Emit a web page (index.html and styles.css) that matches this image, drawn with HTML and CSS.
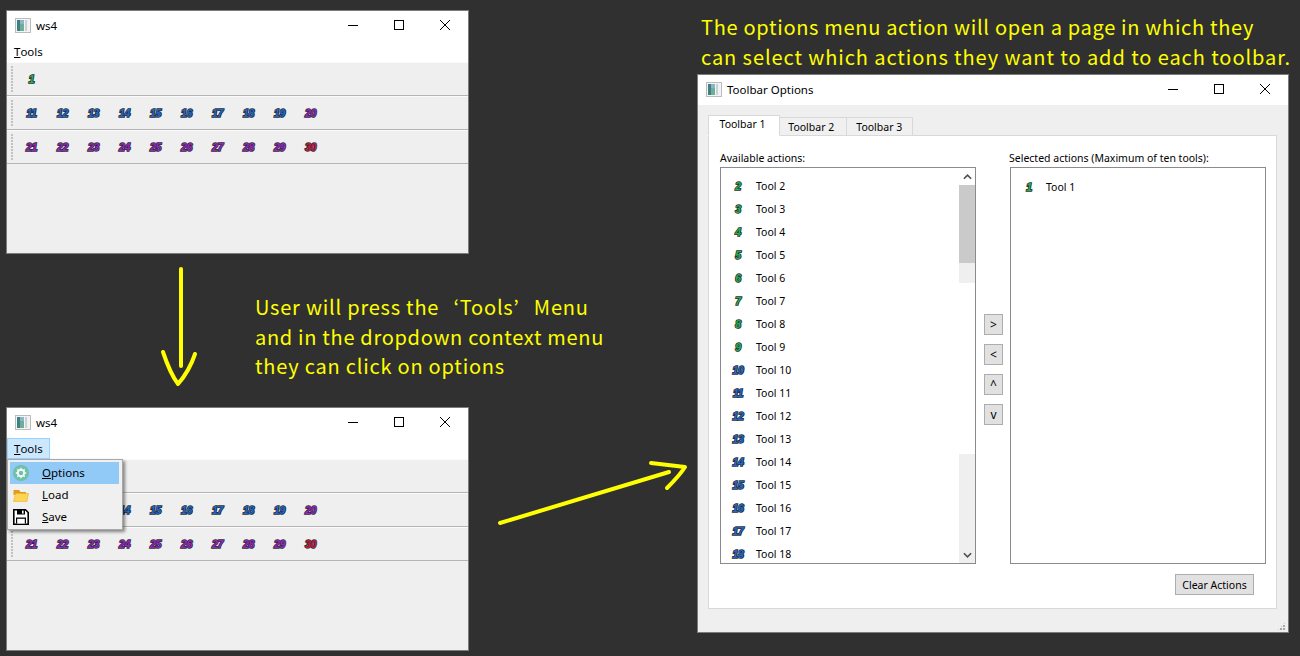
FILE: index.html
```html
<!DOCTYPE html>
<html lang="en">
<head>
    <meta charset="UTF-8">
    <title>Toolbar options walkthrough</title>
    <link rel="stylesheet" href="styles.css">
</head>
<body>
    <svg class="defs">
        <symbol id="appIcon" viewBox="0 0 16 15">
            <rect x="0.5" y="0.5" width="15" height="14" fill="#f4f4f4" stroke="#bcbcbc"/>
            <rect x="2" y="2" width="3" height="11" fill="#3e8088"/>
            <rect x="5" y="2" width="4" height="11" fill="#6fae94"/>
            <rect x="5" y="2" width="4" height="4" fill="#8fb4c8"/>
            <rect x="10" y="2" width="2" height="11" fill="#c4d4d8"/>
            <rect x="12" y="2" width="2" height="11" fill="#eef2f2"/>
        </symbol>
        <symbol id="winMin" viewBox="0 0 10 10">
            <path d="M0 5.5H10" stroke="#000" fill="none"/>
        </symbol>
        <symbol id="winMax" viewBox="0 0 10 10">
            <rect x="0.5" y="0.5" width="9" height="9" stroke="#000" fill="none"/>
        </symbol>
        <symbol id="winClose" viewBox="0 0 10 10">
            <path d="M0 0L10 10M10 0L0 10" stroke="#000" fill="none"/>
        </symbol>
    </svg>

    <svg class="arrows" viewBox="0 0 1300 656">
        <path d="M181 269V366"/>
        <path d="M163 352C167 364 172 376 178 384C185 376 191 366 195 354"/>
        <path d="M500 523L669 472"/>
        <path d="M651 463L685 467C680 475 674 481 667 488"/>
    </svg>

    <p class="note note-menu">User will press the <span class="quote-open">‘</span>Tools<span class="quote-close">’</span> Menu<br><span class="tight">and in the dropdown context menu</span><br>they can click on options</p>
    <p class="note note-options"><span class="tight">The options menu action will open a page in which they</span><br><span class="wide">can select which actions they want to add to each toolbar.</span></p>

    <div class="window win-top">
        <div class="titlebar">
            <svg class="app-icon"><use href="#appIcon"/></svg>
            <span>ws4</span>
            <div class="controls">
                <svg><use href="#winMin"/></svg>
                <svg><use href="#winMax"/></svg>
                <svg><use href="#winClose"/></svg>
            </div>
        </div>
        <div class="menubar"><span class="menu-title"><u>T</u>ools</span></div>
        <div class="toolbar">
            <i class="handle"></i>
            <span class="tool"><b class="num green">1</b></span>
        </div>
        <div class="toolbar">
            <i class="handle"></i>
            <span class="tool"><b class="num blue">11</b></span>
            <span class="tool"><b class="num blue">12</b></span>
            <span class="tool"><b class="num blue">13</b></span>
            <span class="tool"><b class="num blue">14</b></span>
            <span class="tool"><b class="num blue">15</b></span>
            <span class="tool"><b class="num blue">16</b></span>
            <span class="tool"><b class="num blue">17</b></span>
            <span class="tool"><b class="num blue">18</b></span>
            <span class="tool"><b class="num blue">19</b></span>
            <span class="tool"><b class="num purple">20</b></span>
        </div>
        <div class="toolbar">
            <i class="handle"></i>
            <span class="tool"><b class="num purple">21</b></span>
            <span class="tool"><b class="num purple">22</b></span>
            <span class="tool"><b class="num purple">23</b></span>
            <span class="tool"><b class="num purple">24</b></span>
            <span class="tool"><b class="num purple">25</b></span>
            <span class="tool"><b class="num purple">26</b></span>
            <span class="tool"><b class="num purple">27</b></span>
            <span class="tool"><b class="num purple">28</b></span>
            <span class="tool"><b class="num purple">29</b></span>
            <span class="tool"><b class="num red">30</b></span>
        </div>
    </div>

    <div class="window win-bottom">
        <div class="titlebar">
            <svg class="app-icon"><use href="#appIcon"/></svg>
            <span>ws4</span>
            <div class="controls">
                <svg><use href="#winMin"/></svg>
                <svg><use href="#winMax"/></svg>
                <svg><use href="#winClose"/></svg>
            </div>
        </div>
        <div class="menubar"><span class="menu-title open"><u>T</u>ools</span></div>
        <div class="toolbar">
            <i class="handle"></i>
            <span class="tool"><b class="num green">1</b></span>
        </div>
        <div class="toolbar">
            <i class="handle"></i>
            <span class="tool"><b class="num blue">11</b></span>
            <span class="tool"><b class="num blue">12</b></span>
            <span class="tool"><b class="num blue">13</b></span>
            <span class="tool"><b class="num blue">14</b></span>
            <span class="tool"><b class="num blue">15</b></span>
            <span class="tool"><b class="num blue">16</b></span>
            <span class="tool"><b class="num blue">17</b></span>
            <span class="tool"><b class="num blue">18</b></span>
            <span class="tool"><b class="num blue">19</b></span>
            <span class="tool"><b class="num purple">20</b></span>
        </div>
        <div class="toolbar">
            <i class="handle"></i>
            <span class="tool"><b class="num purple">21</b></span>
            <span class="tool"><b class="num purple">22</b></span>
            <span class="tool"><b class="num purple">23</b></span>
            <span class="tool"><b class="num purple">24</b></span>
            <span class="tool"><b class="num purple">25</b></span>
            <span class="tool"><b class="num purple">26</b></span>
            <span class="tool"><b class="num purple">27</b></span>
            <span class="tool"><b class="num purple">28</b></span>
            <span class="tool"><b class="num purple">29</b></span>
            <span class="tool"><b class="num red">30</b></span>
        </div>

        <div class="popup">
            <div class="popup-row active">
                <svg viewBox="0 0 16 16">
                    <circle cx="8" cy="8" r="8" fill="#6fc0a8"/>
                    <circle cx="8" cy="8" r="3.2" fill="none" stroke="#f2f6f6" stroke-width="2"/>
                    <path d="M8 2.8V13.2M2.8 8H13.2M4.3 4.3L11.7 11.7M11.7 4.3L4.3 11.7" stroke="#f2f6f6" stroke-width="1.4" stroke-dasharray="1.6 7.2 1.6 0"/>
                </svg>
                <span><u>O</u>ptions</span>
            </div>
            <div class="popup-row">
                <svg viewBox="0 0 16 16">
                    <path d="M0.5 3H6L7.5 5H13V8H0.5Z" fill="#e09a1c"/>
                    <path d="M0.5 14.5L2.5 6.5H15.5L14 14.5Z" fill="#fcd555" stroke="#eab030" stroke-width="0.6"/>
                </svg>
                <span><u>L</u>oad</span>
            </div>
            <div class="popup-row">
                <svg viewBox="0 0 16 16">
                    <path d="M0.8 0.8H12.5L15.2 3.5V15.2H0.8Z" fill="#fff" stroke="#000" stroke-width="1.6"/>
                    <rect x="4" y="1" width="8" height="4.5" fill="#000"/>
                    <rect x="9" y="1.6" width="1.6" height="3" fill="#fff"/>
                    <rect x="3" y="8.5" width="10" height="6" fill="#000"/>
                    <rect x="4.2" y="9.8" width="7.6" height="4.8" fill="#fff"/>
                </svg>
                <span><u>S</u>ave</span>
            </div>
        </div>
    </div>

    <div class="window win-dialog">
        <div class="titlebar">
            <svg class="app-icon"><use href="#appIcon"/></svg>
            <span>Toolbar Options</span>
            <div class="controls">
                <svg><use href="#winMin"/></svg>
                <svg><use href="#winMax"/></svg>
                <svg><use href="#winClose"/></svg>
            </div>
        </div>
        <div class="dialog-body">
            <div class="tabs">
                <span class="tab active">Toolbar 1</span>
                <span class="tab middle">Toolbar 2</span>
                <span class="tab">Toolbar 3</span>
            </div>
            <div class="tab-pane">
                <div class="columns">
                    <label class="col-label">Available actions:</label>
                    <span></span>
                    <label class="col-label selected-label">Selected actions (Maximum of ten tools):</label>

                    <div class="list">
                        <div class="rows">
                            <div class="row"><span class="row-icon"><b class="num green">2</b></span>Tool 2</div>
                            <div class="row"><span class="row-icon"><b class="num green">3</b></span>Tool 3</div>
                            <div class="row"><span class="row-icon"><b class="num green">4</b></span>Tool 4</div>
                            <div class="row"><span class="row-icon"><b class="num green">5</b></span>Tool 5</div>
                            <div class="row"><span class="row-icon"><b class="num green">6</b></span>Tool 6</div>
                            <div class="row"><span class="row-icon"><b class="num green">7</b></span>Tool 7</div>
                            <div class="row"><span class="row-icon"><b class="num green">8</b></span>Tool 8</div>
                            <div class="row"><span class="row-icon"><b class="num green">9</b></span>Tool 9</div>
                            <div class="row"><span class="row-icon"><b class="num blue">10</b></span>Tool 10</div>
                            <div class="row"><span class="row-icon"><b class="num blue">11</b></span>Tool 11</div>
                            <div class="row"><span class="row-icon"><b class="num blue">12</b></span>Tool 12</div>
                            <div class="row"><span class="row-icon"><b class="num blue">13</b></span>Tool 13</div>
                            <div class="row"><span class="row-icon"><b class="num blue">14</b></span>Tool 14</div>
                            <div class="row"><span class="row-icon"><b class="num blue">15</b></span>Tool 15</div>
                            <div class="row"><span class="row-icon"><b class="num blue">16</b></span>Tool 16</div>
                            <div class="row"><span class="row-icon"><b class="num blue">17</b></span>Tool 17</div>
                            <div class="row"><span class="row-icon"><b class="num blue">18</b></span>Tool 18</div>
                        </div>
                        <div class="scrollbar">
                            <div class="scroll-btn">
                                <svg viewBox="0 0 10 6"><path d="M1 5L5 1L9 5"/></svg>
                            </div>
                            <div class="scroll-thumb"></div>
                            <div class="scroll-light"></div>
                            <div class="scroll-gap"></div>
                            <div class="scroll-light bottom"></div>
                            <div class="scroll-btn down">
                                <svg viewBox="0 0 10 6"><path d="M1 1L5 5L9 1"/></svg>
                            </div>
                        </div>
                    </div>

                    <div class="move-buttons">
                        <button>&gt;</button>
                        <button>&lt;</button>
                        <button>^</button>
                        <button>v</button>
                    </div>

                    <div class="list selected-list">
                        <div class="rows">
                            <div class="row"><span class="row-icon"><b class="num green">1</b></span>Tool 1</div>
                        </div>
                    </div>
                </div>
                <div class="pane-footer">
                    <button class="clear-btn">Clear Actions</button>
                </div>
            </div>
        </div>
        <i class="grip"></i>
    </div>
</body>
</html>
```

FILE: styles.css
```css
body {
    margin: 0;
    position: relative;
    width: 1300px;
    height: 656px;
    overflow: hidden;
    background-color: #303030;
    font-family: "Noto Sans", sans-serif;
    font-size: 11.5px;
    color: #000;
}
.defs {
    position: absolute;
    width: 0;
    height: 0;
}
.arrows {
    position: absolute;
    left: 0;
    top: 0;
    width: 1300px;
    height: 656px;
}
.arrows path {
    fill: none;
    stroke: #ffff00;
    stroke-width: 4;
    stroke-linecap: round;
    stroke-linejoin: round;
}
.note {
    position: absolute;
    margin: 0;
    color: #ffff00;
    font-family: "Noto Sans CJK JP", sans-serif;
    font-size: 20px;
    letter-spacing: 0.78px;
    white-space: nowrap;
}
.note-menu {
    left: 255px;
    top: 292px;
    line-height: 29.5px;
}
.note-options {
    left: 701px;
    top: 12px;
    line-height: 30px;
}
.tight {
    letter-spacing: 0.69px;
}
.wide {
    letter-spacing: 0.92px;
}
.quote-open {
    margin-left: 9px;
}
.quote-close {
    margin-right: 9px;
}

/* windows */
.window {
    position: absolute;
    box-sizing: border-box;
    display: flex;
    flex-direction: column;
    border: 1px solid #7c7c7c;
    background-color: #efefef;
}
.win-top {
    left: 6px;
    top: 10px;
    width: 463px;
    height: 244px;
}
.win-bottom {
    left: 6px;
    top: 407px;
    width: 463px;
    height: 244px;
}
.win-dialog {
    left: 697px;
    top: 74px;
    width: 592px;
    height: 559px;
}
.titlebar {
    flex: none;
    box-sizing: border-box;
    display: flex;
    align-items: center;
    gap: 5px;
    height: 30px;
    padding: 0 0 2px 8px;
    background-color: #fff;
}
.app-icon {
    width: 16px;
    height: 15px;
}
.controls {
    display: flex;
    margin-left: auto;
}
.controls svg {
    width: 10px;
    height: 10px;
    padding: 0 18px;
}
.menubar {
    flex: none;
    display: flex;
    height: 21px;
    background-color: #fff;
}
.menu-title {
    box-sizing: border-box;
    display: flex;
    align-items: center;
    white-space: pre;
    width: 43px;
    padding-left: 6px;
    border: 1px solid transparent;
}
.menu-title.open {
    background-color: #cce8ff;
    border-color: #99d1ff;
}
.toolbar {
    flex: none;
    display: flex;
    align-items: center;
    box-sizing: border-box;
    height: 34px;
    padding-left: 4px;
    border-top: 1px solid #fbfbfb;
    border-bottom: 1px solid #b4b4b4;
}
.handle {
    width: 2px;
    height: 26px;
    margin-right: 3px;
    background-image: repeating-linear-gradient(#c2c2c2 0 2px, transparent 2px 3px);
}
.tool {
    width: 31px;
    text-align: center;
    line-height: 16px;
}
.num {
    font-family: "Liberation Sans", sans-serif;
    font-size: 10.5px;
    font-weight: bold;
    font-style: italic;
    letter-spacing: -0.4px;
    paint-order: stroke fill;
    -webkit-text-stroke: 1.6px #2a2d36;
}
.num.green {
    color: #28b04e;
}
.num.blue {
    color: #2168c8;
}
.num.purple {
    color: #9a26c0;
}
.num.red {
    color: #d21843;
}

/* dropdown from the Tools menu */
.popup {
    position: absolute;
    left: 0;
    top: 51px;
    box-sizing: border-box;
    width: 116px;
    height: 71px;
    padding: 2px 3px 2px 2px;
    background-color: #f0f0f0;
    border: 1px solid #a8a8a8;
    box-shadow: 2px 2px 3px rgba(0, 0, 0, 0.45);
}
.popup-row {
    display: flex;
    align-items: center;
    gap: 13px;
    height: 22px;
    padding-left: 3px;
}
.popup-row span {
    margin-top: -2px;
}
.popup-row svg {
    width: 16px;
    height: 16px;
}
.popup-row.active {
    background-color: #91c9f7;
}

/* options dialog */
.dialog-body {
    flex: 1;
    display: flex;
    flex-direction: column;
    padding: 11px 11px 23px 10px;
    font-size: 10.5px;
}
.tabs {
    display: flex;
    align-items: flex-end;
    height: 20px;
    margin-bottom: -1px;
}
.tab {
    box-sizing: border-box;
    display: flex;
    align-items: center;
    justify-content: center;
    width: 67.5px;
    height: 19px;
    background-color: #f0f0f0;
    border: 1px solid #d9d9d9;
    margin-left: -1px;
}
.tab.middle {
    padding-right: 3px;
}
.tab.active {
    position: relative;
    width: 72px;
    height: 21px;
    margin-left: 0;
    padding: 0 3px 3px 0;
    background-color: #fff;
    border-bottom-color: #fff;
}
.tab-pane {
    flex: 1;
    display: flex;
    flex-direction: column;
    background-color: #fff;
    border: 1px solid #d9d9d9;
}
.columns {
    display: grid;
    grid-template-columns: 256px 34px 256px;
    grid-template-rows: 16px 397px;
    padding: 15px 0 0 11px;
}
.col-label {
    margin-top: -1px;
    line-height: 16px;
    white-space: nowrap;
}
.selected-label {
    margin-left: -1px;
}
.list {
    display: flex;
    box-sizing: border-box;
    border: 1px solid #8a8a8f;
    background-color: #fff;
    min-height: 0;
}
.rows {
    flex: 1;
    min-width: 0;
    overflow: hidden;
    padding-top: 6px;
}
.row {
    display: flex;
    align-items: center;
    height: 23px;
    padding-left: 5px;
    white-space: nowrap;
}
.row-icon {
    width: 24px;
    margin-right: 6px;
    text-align: center;
}
.selected-list .rows {
    padding-top: 7px;
}
.selected-list .row-icon {
    padding-left: 1px;
    margin-right: 5px;
}
.scrollbar {
    flex: none;
    display: flex;
    flex-direction: column;
    width: 16px;
}
.scroll-btn {
    flex: none;
    display: flex;
    align-items: center;
    justify-content: center;
    height: 17px;
}
.scroll-btn svg {
    width: 9px;
    height: 6px;
}
.scroll-btn path {
    fill: none;
    stroke: #505050;
    stroke-width: 1.8;
}
.scroll-btn.down {
    background-color: #efefef;
}
.scroll-thumb {
    height: 78px;
    background-color: #cacaca;
}
.scroll-light {
    height: 20px;
    background-color: #efefef;
}
.scroll-light.bottom {
    height: 92px;
}
.scroll-gap {
    flex: 1;
}
.move-buttons {
    display: flex;
    flex-direction: column;
    justify-content: center;
    align-items: center;
    gap: 9px;
    padding-top: 8px;
    padding-left: 1px;
}
button {
    box-sizing: border-box;
    width: 19px;
    height: 21px;
    padding: 0;
    font-family: inherit;
    font-size: 12px;
    color: #000;
    background-color: #e1e1e1;
    border: 1px solid #adadad;
}
.pane-footer {
    display: flex;
    justify-content: flex-end;
    padding: 10px 22px 0 0;
}
.clear-btn {
    width: 79px;
    font-size: 10.5px;
}
.grip {
    position: absolute;
    right: 2px;
    bottom: 1px;
    width: 9px;
    height: 9px;
    background: linear-gradient(#a8a8a8 2px, transparent 2px) 0 0 / 3px 3px;
    -webkit-mask: linear-gradient(90deg, #000 2px, transparent 2px) 0 0 / 3px 3px;
    clip-path: polygon(100% 0, 100% 100%, 0 100%);
}
```
